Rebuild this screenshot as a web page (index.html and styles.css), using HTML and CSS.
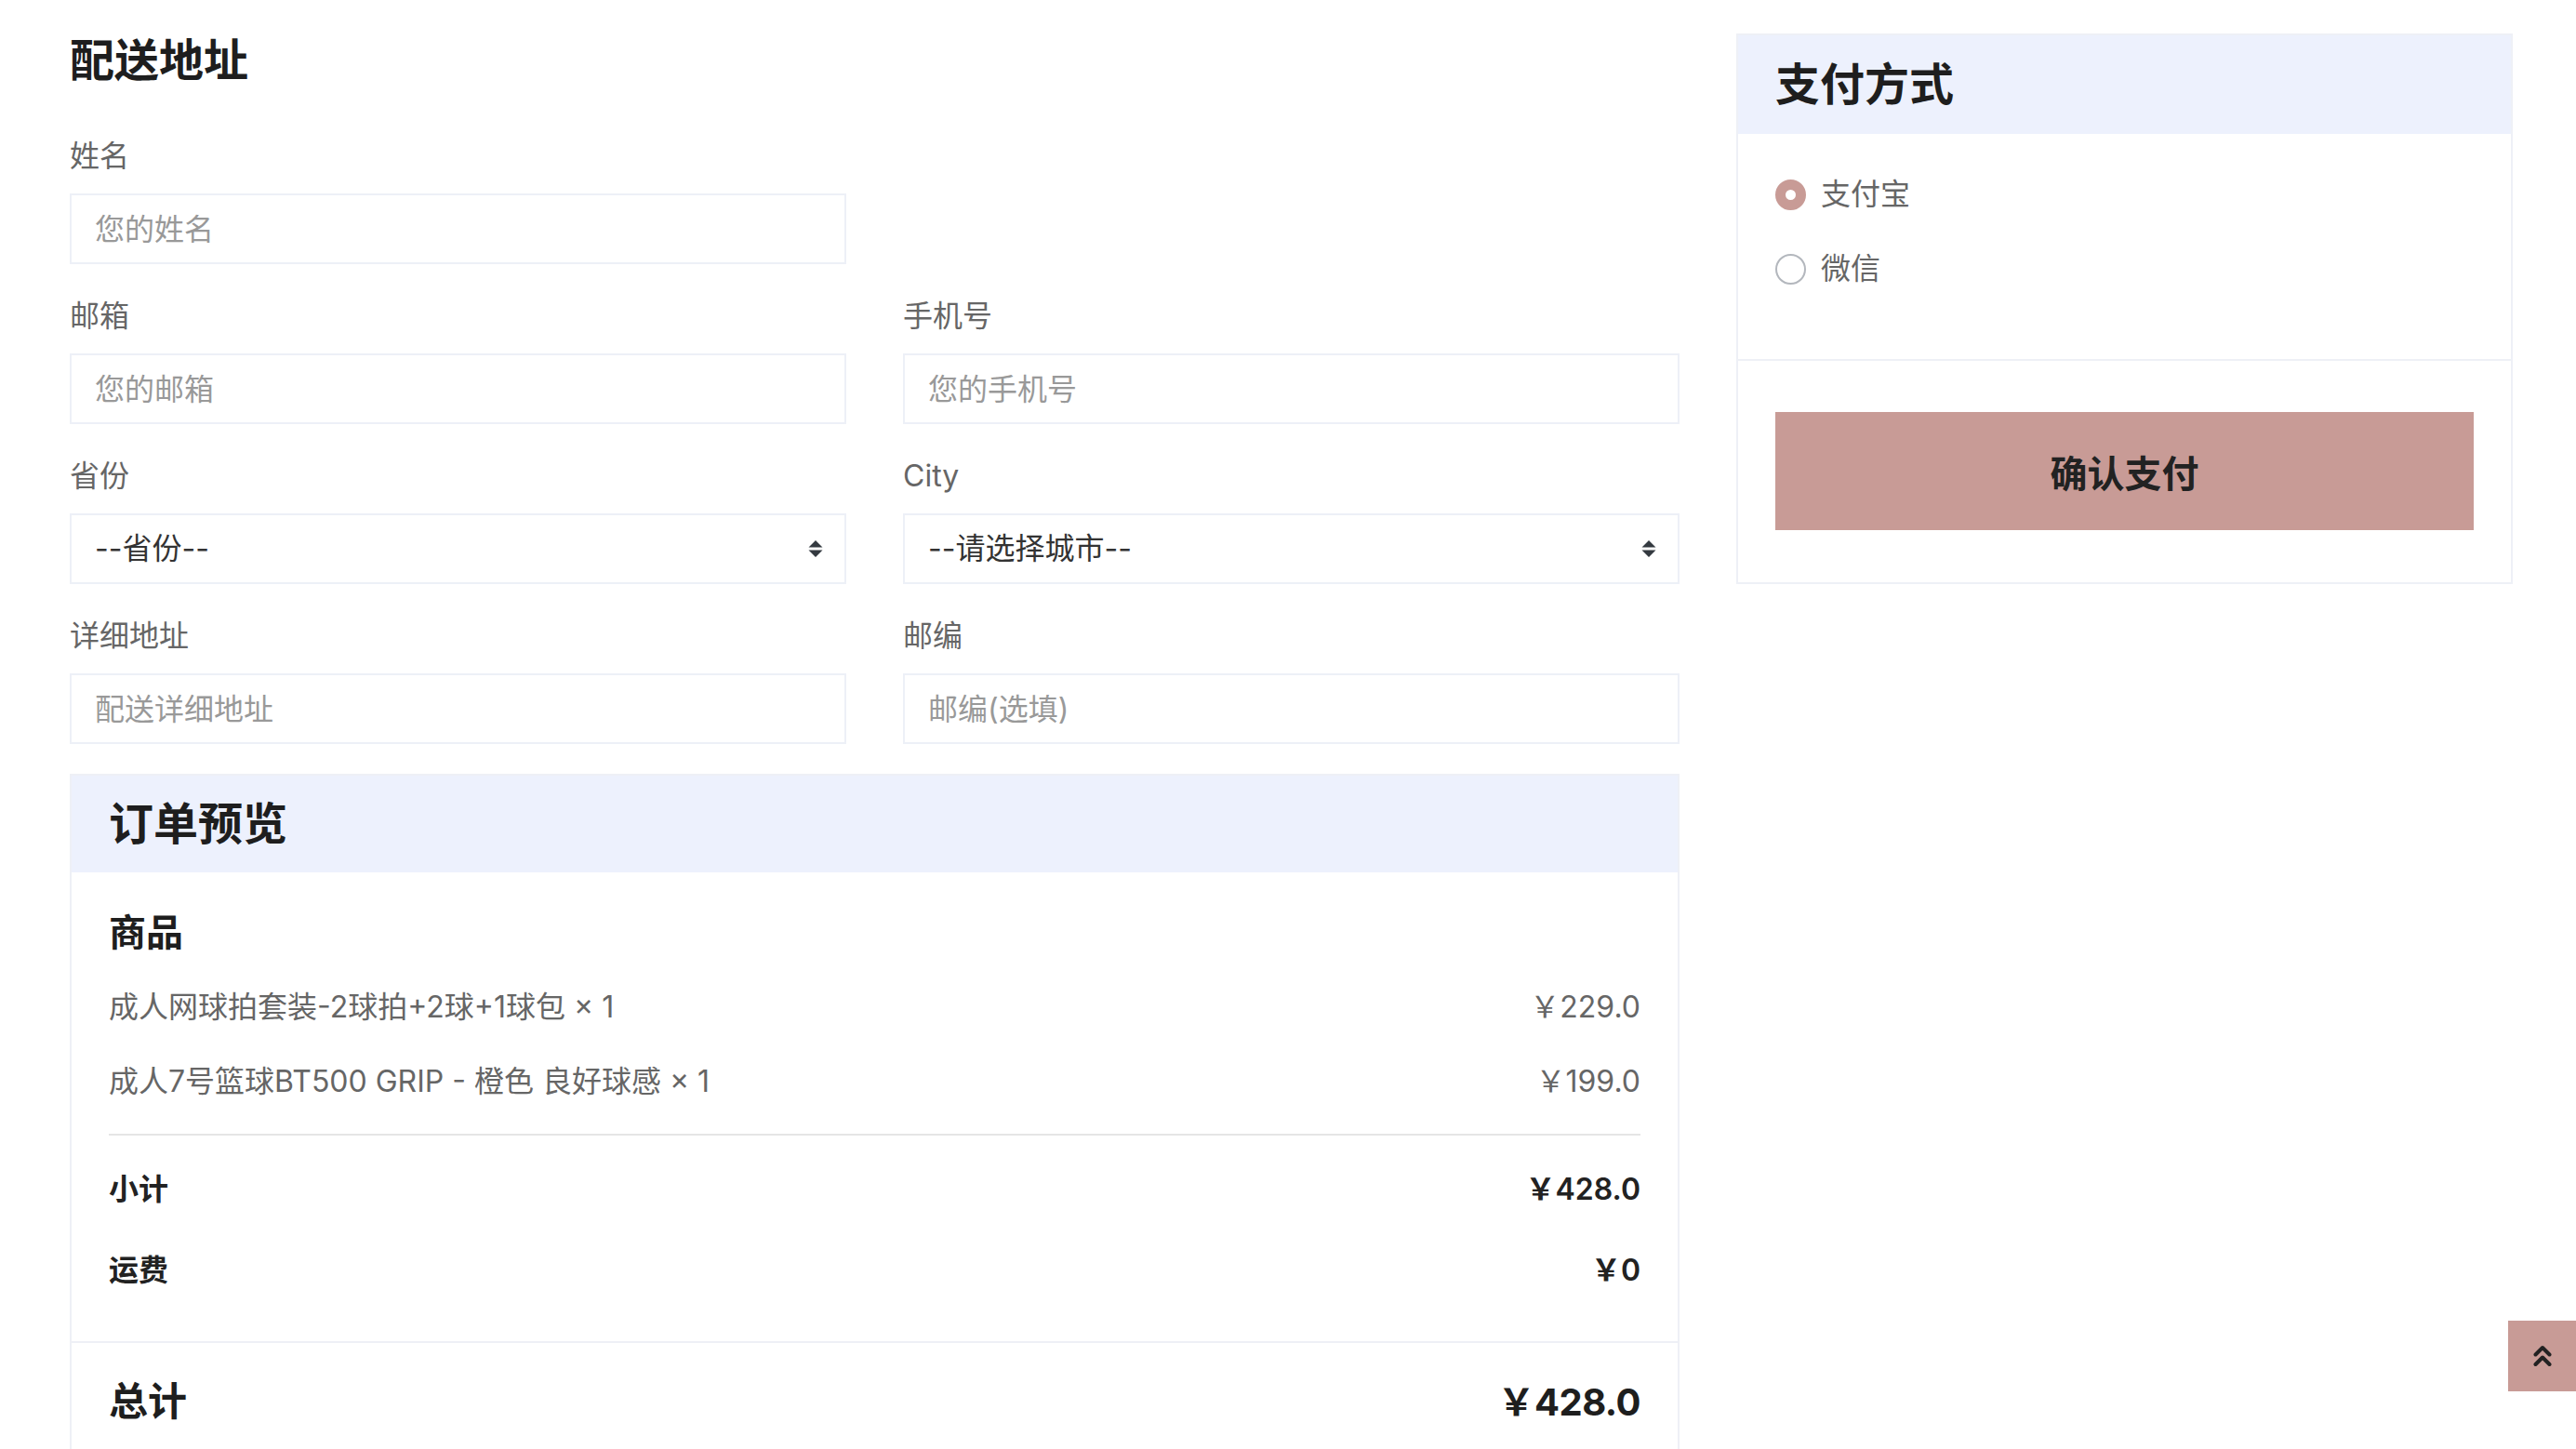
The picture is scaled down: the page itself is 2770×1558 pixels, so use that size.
FILE: index.html
```html
<!DOCTYPE html>
<html lang="zh-CN">
<head>
<meta charset="utf-8">
<title>结算</title>
<link rel="stylesheet" href="styles.css">
</head>
<body>
<div class="page">
  <main class="main">
    <h2 class="section-title">配送地址</h2>
    <form class="form-grid">
      <div class="field">
        <label class="label">姓名</label>
        <input class="control" type="text" placeholder="您的姓名">
      </div>
      <div class="field field-empty"></div>
      <div class="field">
        <label class="label">邮箱</label>
        <input class="control" type="text" placeholder="您的邮箱">
      </div>
      <div class="field">
        <label class="label">手机号</label>
        <input class="control" type="text" placeholder="您的手机号">
      </div>
      <div class="field">
        <label class="label">省份</label>
        <div class="select-wrap">
          <select class="control select"><option>--省份--</option></select>
          <svg class="select-arrow" viewBox="0 0 16 20" aria-hidden="true"><path d="M8 1 L15.5 8.5 H0.5 Z M8 19 L15.5 11.5 H0.5 Z" fill="#343a40"/></svg>
        </div>
      </div>
      <div class="field">
        <label class="label">City</label>
        <div class="select-wrap">
          <select class="control select"><option>--请选择城市--</option></select>
          <svg class="select-arrow" viewBox="0 0 16 20" aria-hidden="true"><path d="M8 1 L15.5 8.5 H0.5 Z M8 19 L15.5 11.5 H0.5 Z" fill="#343a40"/></svg>
        </div>
      </div>
      <div class="field">
        <label class="label">详细地址</label>
        <input class="control" type="text" placeholder="配送详细地址">
      </div>
      <div class="field">
        <label class="label">邮编</label>
        <input class="control" type="text" placeholder="邮编(选填)">
      </div>
    </form>

    <section class="card order">
      <div class="card-header"><h3 class="card-title">订单预览</h3></div>
      <div class="card-body products">
        <h4 class="sub-title">商品</h4>
        <div class="line item"><span>成人网球拍套装-2球拍+2球+1球包 × 1</span><span>￥229.0</span></div>
        <div class="line item"><span>成人7号篮球BT500 GRIP - 橙色 良好球感 × 1</span><span>￥199.0</span></div>
        <hr class="rule">
        <div class="line sum"><span>小计</span><span>￥428.0</span></div>
        <div class="line sum"><span>运费</span><span>￥0</span></div>
      </div>
      <div class="card-footer total">
        <span>总计</span><span class="total-price">￥428.0</span>
      </div>
    </section>
  </main>

  <aside class="side">
    <section class="card pay">
      <div class="card-header"><h3 class="card-title">支付方式</h3></div>
      <div class="card-body methods">
        <label class="radio-row"><input type="radio" name="pay" checked><span>支付宝</span></label>
        <label class="radio-row"><input type="radio" name="pay"><span>微信</span></label>
      </div>
      <div class="card-footer pay-footer">
        <button class="pay-btn" type="button">确认支付</button>
      </div>
    </section>
  </aside>
</div>

<a class="back-top" href="#" aria-label="返回顶部">
  <svg viewBox="0 0 20 24" width="20" height="24" aria-hidden="true"><path d="M2.5 10.5 L10 3 L17.5 10.5 M2.5 21 L10 13.5 L17.5 21" fill="none" stroke="#222" stroke-width="4" stroke-linecap="round" stroke-linejoin="round"/></svg>
</a>
</body>
</html>
```

FILE: styles.css
```css
* { box-sizing: border-box; }

html { scrollbar-width: none; }
html::-webkit-scrollbar { display: none; }

html, body {
  margin: 0;
  padding: 0;
  background: #fff;
}

body {
  font-family: "Inter", "Noto Sans CJK SC", sans-serif;
  font-size: 32px;
  line-height: 48px;
  color: #212121;
}

.page {
  display: grid;
  grid-template-columns: 1731px 835px;
  column-gap: 61px;
  align-items: start;
  padding: 36px 0 0 75px;
}

.section-title {
  margin: 0 0 50px;
  font-size: 48px;
  line-height: 58px;
  font-weight: 700;
  color: #1e1e1e;
}

.form-grid {
  display: grid;
  grid-template-columns: 835px 835px;
  column-gap: 61px;
  row-gap: 32px;
  margin: 0;
}

.label {
  display: block;
  color: #666;
  margin-bottom: 16px;
}

.control {
  display: block;
  width: 100%;
  height: 76px;
  margin: 0;
  border: 2px solid #edf0f7;
  border-radius: 0;
  background: #fff;
  padding: 0 25px;
  font: inherit;
  color: #333;
  outline: none;
}

.control::placeholder { color: #999; }

.select-wrap { position: relative; }

.select {
  -webkit-appearance: none;
  appearance: none;
  color: #333;
}

.select-arrow {
  position: absolute;
  right: 25px;
  top: 28px;
  width: 16px;
  height: 20px;
  pointer-events: none;
}

.card {
  border: 2px solid #eef0f6;
  background: #fff;
}

.order { margin-top: 32px; }

.card-header {
  background: #edf1fd;
  padding: 23px 40px;
}

.pay .card-header { padding: 24px 40px; }

.card-title {
  margin: 0;
  font-size: 48px;
  line-height: 58px;
  font-weight: 700;
  color: #1e1e1e;
}

.products { padding: 41px 40px 13px; }

.sub-title {
  margin: 0 0 32px;
  font-size: 40px;
  line-height: 48px;
  font-weight: 700;
  color: #1e1e1e;
}

.line {
  display: flex;
  justify-content: space-between;
}

.item {
  color: #666;
  margin-bottom: 32px;
}

.rule {
  border: 0;
  height: 2px;
  background: #e5e5e5;
  margin: 0 0 34px;
}

.sum {
  font-weight: 600;
  color: #222;
  margin-bottom: 39px;
}

.card-footer { border-top: 2px solid #eef0f6; }

.total {
  display: flex;
  justify-content: space-between;
  align-items: baseline;
  padding: 38px 40px 40px;
  font-size: 42px;
  line-height: 50px;
  font-weight: 700;
  color: #1e1e1e;
}

.total-price {
  font-size: 40px;
  letter-spacing: -0.5px;
}

.methods { padding: 41px 40px 41px; }

.radio-row {
  display: flex;
  align-items: center;
  gap: 16px;
  color: #666;
  margin-bottom: 32px;
}

.radio-row input {
  -webkit-appearance: none;
  appearance: none;
  width: 33px;
  height: 33px;
  margin: 0;
  border: 2px solid #b3b7bd;
  border-radius: 50%;
  background: #fff;
  flex: none;
}

.radio-row input:checked {
  border: 11.5px solid #c89b96;
}

.pay-footer { padding: 55px 40px 56px; }

.pay-btn {
  display: block;
  width: 100%;
  height: 127px;
  border: 0;
  border-radius: 0;
  background: #c89b96;
  color: #222;
  font-family: inherit;
  font-size: 40px;
  font-weight: 700;
  cursor: pointer;
}

.back-top {
  position: fixed;
  right: 0;
  bottom: 62px;
  width: 73px;
  height: 76px;
  background: #c89b96;
  display: flex;
  align-items: center;
  justify-content: center;
}
```
